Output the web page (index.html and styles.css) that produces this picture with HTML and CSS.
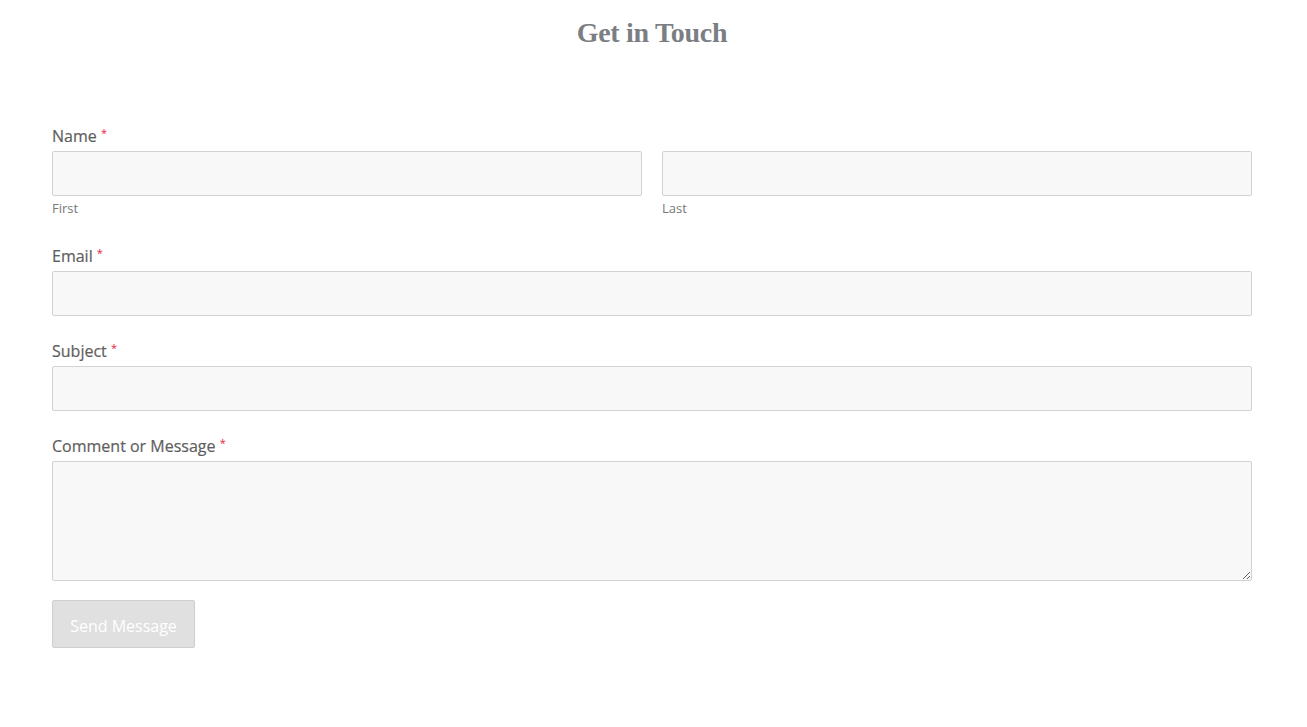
FILE: index.html
```html
<!DOCTYPE html>
<html lang="en">
<head>
<meta charset="utf-8">
<title>Get in Touch</title>
<link rel="stylesheet" href="styles.css">
</head>
<body>
<main class="page">
  <h1 class="title">Get in Touch</h1>
  <form class="form">
    <div class="field field-name">
      <label class="label">Name <span class="req">*</span></label>
      <div class="name-row">
        <div class="name-col">
          <input class="input" type="text">
          <span class="sublabel">First</span>
        </div>
        <div class="name-col">
          <input class="input" type="text">
          <span class="sublabel">Last</span>
        </div>
      </div>
    </div>
    <div class="field">
      <label class="label">Email <span class="req">*</span></label>
      <input class="input" type="email">
    </div>
    <div class="field">
      <label class="label">Subject <span class="req">*</span></label>
      <input class="input" type="text">
    </div>
    <div class="field field-msg">
      <label class="label">Comment or Message <span class="req">*</span></label>
      <textarea class="input textarea"></textarea>
    </div>
    <button class="button" type="button">Send Message</button>
  </form>
</main>
</body>
</html>
```
FILE: styles.css
```css
html, body {
  margin: 0;
  padding: 0;
  background: #ffffff;
}

.page {
  width: 1200px;
  padding: 14px 0 60px 52px;
  font-family: "Open Sans", "Liberation Sans", sans-serif;
}

.title {
  margin: 0;
  font-family: "Liberation Serif", "DejaVu Serif", serif;
  font-weight: 700;
  font-size: 28px;
  line-height: 38px;
  color: #7b7e82;
  text-align: center;
  letter-spacing: -0.3px;
}

.form {
  display: flex;
  flex-direction: column;
  margin-top: 73px;
}

.field {
  display: flex;
  flex-direction: column;
  margin-bottom: 24px;
}

.field-name {
  margin-bottom: 28px;
}

.field-msg {
  margin-bottom: 19px;
}

.label {
  font-size: 16px;
  font-weight: 400;
  line-height: 22px;
  color: #5e5e5e;
  margin-bottom: 4px;
  -webkit-text-stroke: 0.2px #5e5e5e;
}

.req {
  color: #e8233f;
  font-size: 11px;
  vertical-align: top;
  position: relative;
  top: -3px;
  -webkit-text-stroke: 0;
}

.name-row {
  display: flex;
  gap: 20px;
}

.name-col {
  flex: 1;
  display: flex;
  flex-direction: column;
}

.input {
  box-sizing: border-box;
  display: block;
  width: 100%;
  height: 45px;
  margin: 0;
  background: #f8f8f8;
  border: 1px solid #d2d2d2;
  border-radius: 2px;
  font-family: inherit;
  font-size: 15px;
}

.textarea {
  height: 120px;
  resize: vertical;
}

.sublabel {
  font-size: 13px;
  line-height: 18px;
  color: #777777;
  margin-top: 3px;
}

.button {
  align-self: flex-start;
  box-sizing: border-box;
  width: 143px;
  height: 48px;
  background: #e0e0e0;
  border: 1px solid #cfcfcf;
  border-radius: 2px;
  color: #ffffff;
  font-family: inherit;
  font-size: 16px;
  padding: 0;
  padding-top: 4px;
}
```
